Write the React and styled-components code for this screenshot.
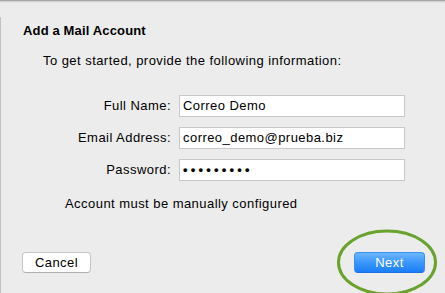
import React from "react";
import styled, { createGlobalStyle } from "styled-components";

const Global = createGlobalStyle`
  html, body { margin: 0; padding: 0; background: #ececec; }
  body { font-family: "Liberation Sans", Arial, Helvetica, sans-serif; }
`;

const Sheet = styled.div`
  position: relative;
  width: 445px;
  height: 293px;
  overflow: hidden;
  box-sizing: border-box;
  background: #ececec;
  display: flex;
  flex-direction: column;
  padding-top: 23px;
  color: #000;
  font-size: 13px;
  line-height: 16px;
  letter-spacing: 0.45px;
  &::before {
    content: "";
    position: absolute;
    left: 0; right: 0; top: 0;
    height: 3px;
    background: linear-gradient(#8e8e8e, #cfcfcf 45%, rgba(236,236,236,0));
  }
  &::after {
    content: "";
    position: absolute;
    left: 0; top: 17px; bottom: 0;
    width: 1px;
    background: #c2c2c2;
  }
`;

const Title = styled.div`
  padding-left: 23px;
  font-weight: bold;
  letter-spacing: 0.15px;
`;

const Intro = styled.div`
  margin-top: 14px;
  padding-left: 43px;
`;

const Form = styled.div`
  margin-top: 26px;
  display: grid;
  grid-template-columns: 171px 226px;
  column-gap: 8px;
  row-gap: 10px;
  align-items: center;
`;

const Label = styled.label`
  text-align: right;
  white-space: nowrap;
`;

const Field = styled.div`
  box-sizing: border-box;
  height: 22px;
  border: 1px solid #c8c8c8;
  background: #fff;
  padding: 0 3px;
  display: flex;
  align-items: center;
  white-space: nowrap;
  letter-spacing: ${(p) => (p.$secret ? "3.2px" : "0.45px")};
  font-weight: ${(p) => (p.$secret ? "bold" : "normal")};
`;

const Note = styled.div`
  margin-top: 15px;
  padding-left: 65px;
`;

const Actions = styled.div`
  position: relative;
  margin-top: 40px;
  display: flex;
  justify-content: space-between;
  padding: 0 20px 0 22px;
`;

const Button = styled.div`
  box-sizing: border-box;
  height: 21px;
  width: ${(p) => (p.$primary ? "71px" : "69px")};
  border-radius: 4px;
  display: flex;
  align-items: center;
  justify-content: center;
  color: ${(p) => (p.$primary ? "#fff" : "#000")};
  background: ${(p) =>
    p.$primary
      ? "linear-gradient(#6db6fc, #3b97fb 50%, #1a7ef9)"
      : "#fff"};
  border: 1px solid ${(p) => (p.$primary ? "#3a8ef6" : "#c6c6c6")};
  border-bottom-color: ${(p) => (p.$primary ? "#1f6fe0" : "#b0b0b0")};
`;

const Ring = styled.svg`
  position: absolute;
  left: 337px;
  top: -23px;
  width: 100px;
  height: 70px;
  pointer-events: none;
  overflow: visible;
`;

export default function App() {
  return (
    <>
      <Global />
      <Sheet>
        <Title>Add a Mail Account</Title>
        <Intro>To get started, provide the following information:</Intro>
        <Form>
          <Label>Full Name:</Label>
          <Field>Correo Demo</Field>
          <Label>Email Address:</Label>
          <Field>correo_demo@prueba.biz</Field>
          <Label>Password:</Label>
          <Field $secret>•••••••••</Field>
        </Form>
        <Note>Account must be manually configured</Note>
        <Actions>
          <Button>Cancel</Button>
          <Button $primary>Next</Button>
          <Ring viewBox="0 0 100 70">
            <ellipse cx="50" cy="33.5" rx="48.5" ry="31.5" fill="none" stroke="#69a22c" strokeWidth="3" />
          </Ring>
        </Actions>
      </Sheet>
    </>
  );
}
